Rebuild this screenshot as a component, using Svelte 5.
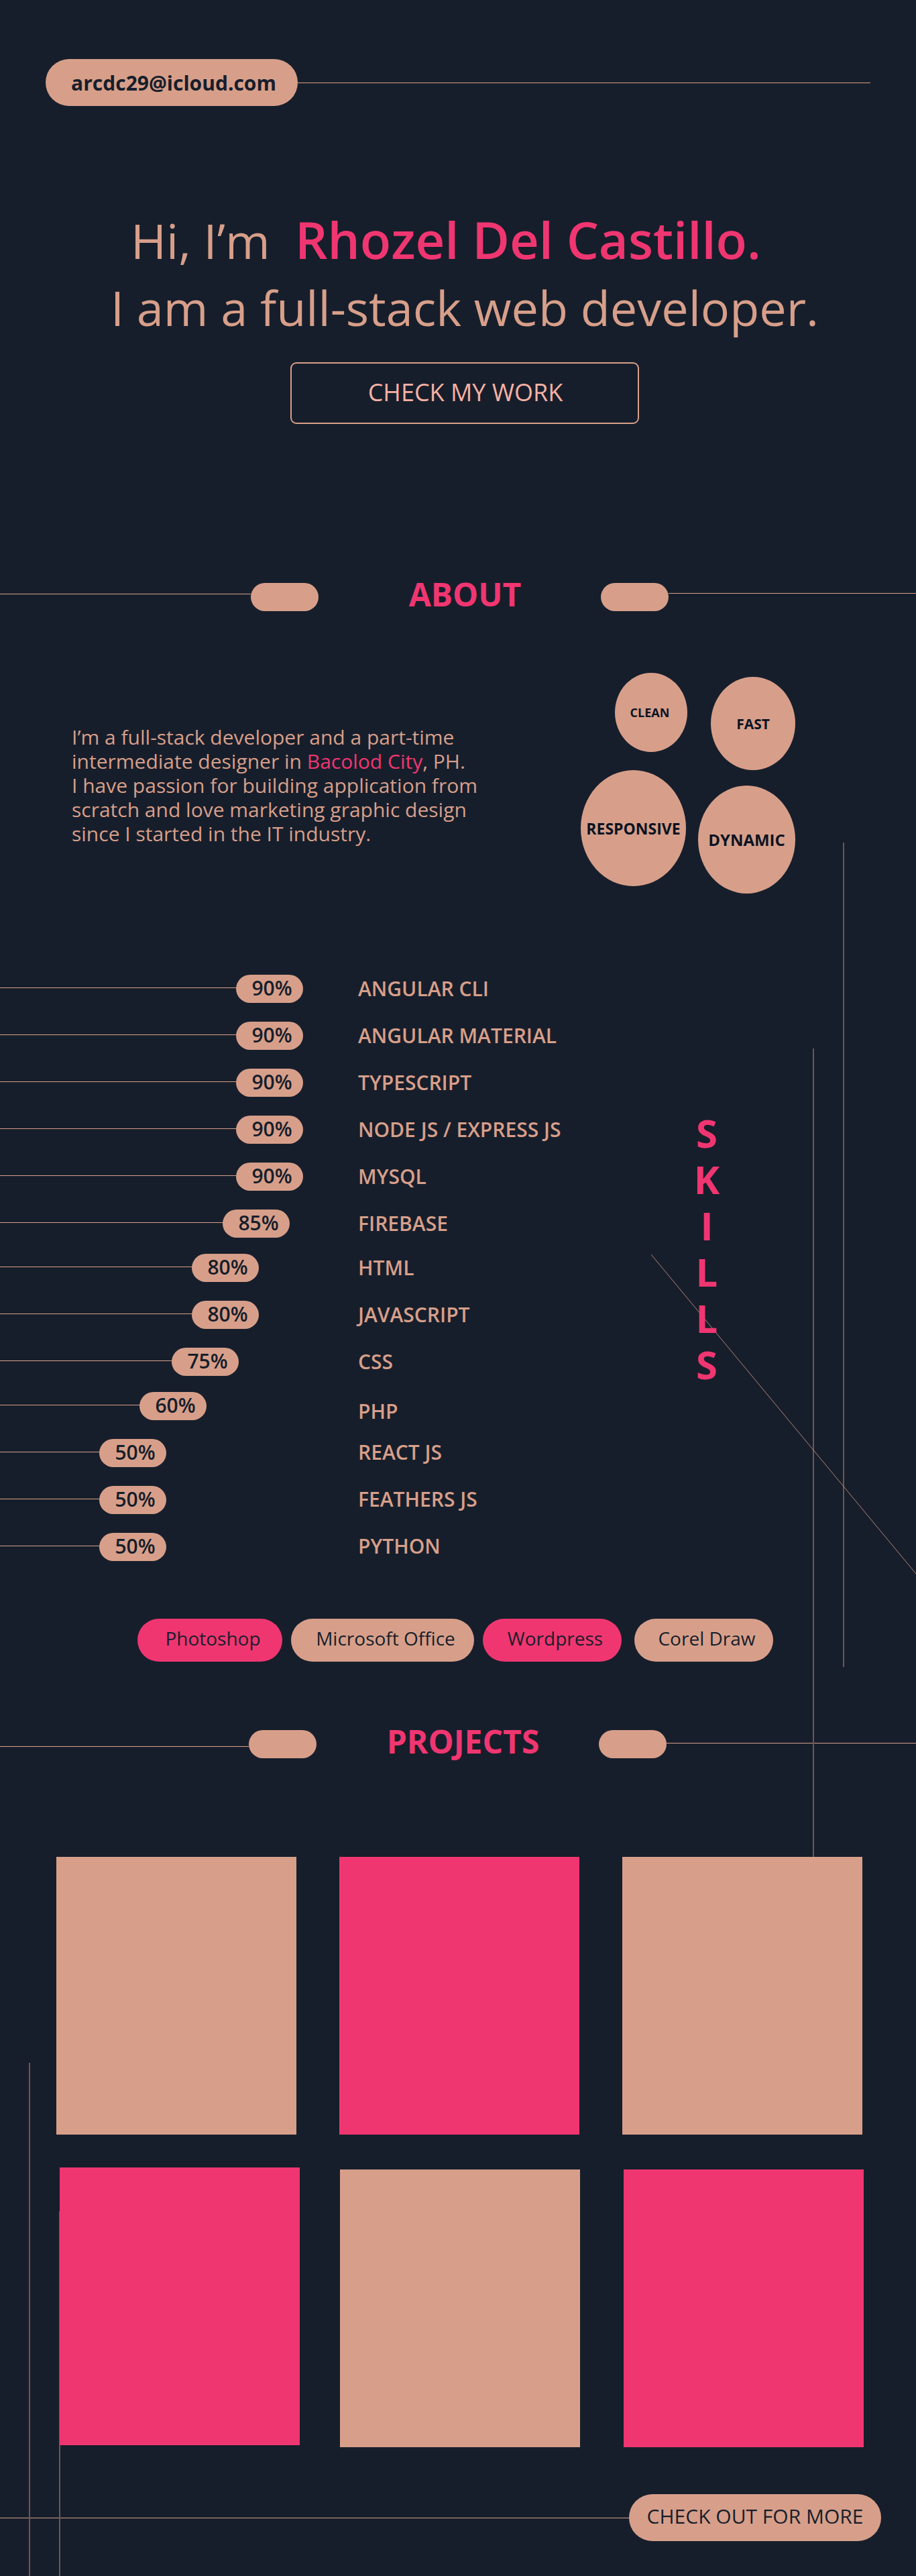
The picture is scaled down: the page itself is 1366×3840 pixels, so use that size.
<script>
  const groups = [
    [
      { name: 'ANGULAR CLI', value: 90, reach: 452 },
      { name: 'ANGULAR MATERIAL', value: 90, reach: 452 },
      { name: 'TYPESCRIPT', value: 90, reach: 452 },
      { name: 'NODE JS / EXPRESS JS', value: 90, reach: 452 },
      { name: 'MYSQL', value: 90, reach: 452 },
      { name: 'FIREBASE', value: 85, reach: 432 }
    ],
    [
      { name: 'HTML', value: 80, reach: 386 },
      { name: 'JAVASCRIPT', value: 80, reach: 386 },
      { name: 'CSS', value: 75, reach: 356 }
    ],
    [
      { name: 'PHP', value: 60, reach: 308, tall: true },
      { name: 'REACT JS', value: 50, reach: 248 },
      { name: 'FEATHERS JS', value: 50, reach: 248 },
      { name: 'PYTHON', value: 50, reach: 248 }
    ]
  ];
  const tools = [
    { name: 'Photoshop', pink: true },
    { name: 'Microsoft Office', pink: false },
    { name: 'Wordpress', pink: true },
    { name: 'Corel Draw', pink: false }
  ];
</script>

<div class="page">
  <header>
    <a class="pill" href="mailto:arcdc29@icloud.com">arcdc29@icloud.com</a>
    <span class="rule"></span>
  </header>

  <section class="hero">
    <h1>
      <span class="greeting">Hi, I’m&nbsp; <strong>Rhozel Del Castillo.</strong></span>
      <span>I am a full-stack web developer.</span>
    </h1>
    <button type="button">CHECK MY WORK</button>
  </section>

  <div class="heading about-heading">
    <span class="rule"></span>
    <span class="knob"></span>
    <h2>ABOUT</h2>
    <span class="knob"></span>
    <span class="rule"></span>
  </div>

  <section class="about">
    <p>
      I’m a full-stack developer and a part-time<br />
      intermediate designer in <em>Bacolod City</em>, PH.<br />
      I have passion for building application from<br />
      scratch and love marketing graphic design<br />
      since I started in the IT industry.
    </p>
    <div class="traits">
      <div class="trait-column">
        <span class="trait clean">CLEAN</span>
        <span class="trait responsive">RESPONSIVE</span>
      </div>
      <div class="trait-column second">
        <span class="trait fast">FAST</span>
        <span class="trait dynamic">DYNAMIC</span>
      </div>
    </div>
  </section>

  <section class="skills">
    <div class="groups">
      {#each groups as group}
        <ul>
          {#each group as skill}
            <li class:tall={skill.tall}>
              <span class="bar" style="width: {skill.reach}px">
                <span class="rule"></span>
                <span class="percent">{skill.value}%</span>
              </span>
              <span class="label">{skill.name}</span>
            </li>
          {/each}
        </ul>
      {/each}
    </div>
    <h2 class="vertical" aria-label="SKILLS">
      {#each 'SKILLS' as letter}<span>{letter}</span>{/each}
    </h2>
  </section>

  <ul class="tools">
    {#each tools as tool}
      <li class:pink={tool.pink}>{tool.name}</li>
    {/each}
  </ul>

  <div class="heading projects-heading">
    <span class="rule"></span>
    <span class="knob"></span>
    <h2>PROJECTS</h2>
    <span class="knob"></span>
    <span class="rule"></span>
  </div>

  <section class="projects">
    <div class="tiles upper">
      <div class="tile"></div>
      <div class="tile pink"></div>
      <div class="tile"></div>
    </div>
    <div class="tiles lower">
      <div class="tile pink"></div>
      <div class="tile"></div>
      <div class="tile pink"></div>
    </div>
  </section>

  <footer>
    <span class="rule"></span>
    <button type="button" class="pill">CHECK OUT FOR MORE</button>
  </footer>

  <span class="strand outer"></span>
  <span class="strand inner"></span>
  <span class="strand low-outer"></span>
  <span class="strand low-inner"></span>
  <svg class="diagonal" viewBox="0 0 395 476" preserveAspectRatio="none" aria-hidden="true">
    <line x1="0" y1="0" x2="395" y2="476" />
  </svg>
</div>

<style>
  :global(body) {
    margin: 0;
    background: #171e2b;
  }
  .page {
    --peach: #d79f8a;
    --pink: #f03671;
    --ink: #171e2b;
    position: relative;
    overflow: hidden;
    padding-bottom: 52px;
    background: var(--ink);
    color: var(--peach);
    font-family: 'Open Sans', 'Noto Sans', sans-serif;
  }
  h1,
  h2,
  p,
  ul {
    margin: 0;
    padding: 0;
    list-style: none;
  }
  button {
    font-family: inherit;
    cursor: pointer;
  }
  .rule {
    flex: 1;
    height: 1px;
    background: var(--peach);
  }
  .pill {
    display: flex;
    align-items: center;
    justify-content: center;
    box-sizing: border-box;
    width: 376px;
    height: 70px;
    border: 0;
    border-radius: 35px;
    background: var(--peach);
    color: var(--ink);
    text-decoration: none;
  }

  header {
    display: flex;
    align-items: center;
    padding: 88px 68px 0;
  }
  header .pill {
    padding-left: 6px;
    font-size: 30px;
    font-weight: 700;
  }

  .hero {
    display: flex;
    flex-direction: column;
    align-items: center;
    gap: 32px;
    padding: 150px 0 237px 20px;
  }
  h1 {
    font-size: 72px;
    line-height: 100px;
    font-weight: 400;
    white-space: nowrap;
  }
  h1 > span {
    display: block;
  }
  h1 .greeting {
    padding-left: 30px;
  }
  h1 strong {
    font-size: 76px;
    line-height: 90px;
    font-weight: 600;
    color: var(--pink);
  }
  .hero button {
    width: 520px;
    height: 92px;
    padding: 0 0 4px 2px;
    border: 2px solid var(--peach);
    border-radius: 9px;
    background: none;
    color: #f6b1a4;
    font-size: 36px;
  }

  .heading {
    display: grid;
    height: 42px;
  }
  .heading h2 {
    padding-left: 16px;
    font-size: 48px;
    line-height: 34px;
    font-weight: 700;
    text-align: center;
    color: var(--pink);
  }
  .knob {
    border-radius: 21px;
    background: var(--peach);
  }
  .about-heading {
    grid-template-columns: 374fr 101px 421px 101px 369fr;
  }
  .projects-heading {
    grid-template-columns: 371fr 101px 421px 101px 372fr;
  }
  .about-heading .rule {
    margin-top: 16px;
  }
  .about-heading .rule:last-child {
    margin-top: 15px;
  }
  .projects-heading .rule {
    margin-top: 24px;
  }
  .projects-heading .rule:last-child {
    margin-top: 19px;
  }

  .about {
    display: flex;
    justify-content: space-between;
    padding: 92px 180px 0 107px;
  }
  .about p {
    padding-top: 78px;
    font-size: 30px;
    line-height: 36px;
    white-space: nowrap;
  }
  .about em {
    font-style: normal;
    color: var(--pink);
  }
  .traits {
    display: flex;
    gap: 16px;
  }
  .trait-column {
    display: flex;
    flex-direction: column;
    align-items: flex-end;
    gap: 27px;
  }
  .trait-column.second {
    gap: 23px;
    padding-top: 6px;
  }
  .trait {
    display: flex;
    align-items: center;
    justify-content: center;
    box-sizing: border-box;
    border-radius: 50%;
    background: var(--peach);
    color: #0b1322;
    font-weight: 700;
  }
  .clean {
    width: 108px;
    height: 118px;
    padding-right: 4px;
    font-size: 18px;
  }
  .fast {
    width: 126px;
    height: 139px;
    font-size: 21px;
  }
  .responsive {
    width: 157px;
    height: 173px;
    margin-right: 2px;
    font-size: 23px;
  }
  .dynamic {
    width: 145px;
    height: 161px;
    font-size: 24px;
  }

  .skills {
    display: flex;
    justify-content: space-between;
    padding: 121px 282px 0 0;
  }
  .groups {
    display: flex;
    flex-direction: column;
    gap: 24px;
  }
  .groups ul {
    display: flex;
    flex-direction: column;
    gap: 28px;
  }
  .groups li {
    display: grid;
    grid-template-columns: 534px auto;
    height: 42px;
    font-size: 30px;
    line-height: 42px;
    font-weight: 600;
  }
  .groups ul:last-child {
    line-height: 40px;
  }
  .groups ul:last-child li {
    line-height: inherit;
  }
  .groups ul:last-child li.tall {
    line-height: 58px;
  }
  .bar {
    display: flex;
    height: 42px;
    line-height: 40px;
  }
  .bar .rule {
    margin-top: 19px;
  }
  .percent {
    box-sizing: border-box;
    width: 100px;
    padding-left: 7px;
    border-radius: 21px;
    background: var(--peach);
    color: var(--ink);
    text-align: center;
  }
  .label {
    white-space: nowrap;
  }
  .vertical {
    position: relative;
    z-index: 1;
    width: 60px;
    padding-top: 201px;
    font-size: 58px;
    line-height: 69px;
    font-weight: 700;
    text-align: center;
    color: var(--pink);
  }
  .vertical span {
    display: block;
  }

  .tools {
    display: grid;
    grid-template-columns: 216px 273px 207px 213px;
    gap: 13px;
    padding: 86px 0 102px 205px;
  }
  .tools li {
    box-sizing: border-box;
    height: 64px;
    padding-left: 9px;
    border-radius: 32px;
    background: var(--peach);
    color: var(--ink);
    font-size: 28px;
    line-height: 58px;
    text-align: center;
  }
  .tools li:last-child {
    margin-left: 6px;
  }
  .tools .pink,
  .tile.pink {
    background: var(--pink);
  }

  .projects {
    position: relative;
    z-index: 1;
    padding: 147px 0 70px;
  }
  .tiles {
    display: grid;
  }
  .tile {
    height: 414px;
    background: var(--peach);
  }
  .upper {
    grid-template-columns: 1fr 1fr 1fr;
    gap: 64px;
    padding: 0 80px 49px 84px;
  }
  .lower {
    grid-template-columns: 358fr 358fr 363fr;
    gap: 60px;
    padding: 0 78px 0 89px;
  }
  .lower .tile + .tile {
    margin-top: 3px;
  }
  .lower .tile:last-child {
    margin-left: 5px;
  }

  footer {
    display: flex;
    align-items: center;
    padding-right: 52px;
  }
  footer .pill {
    padding: 0 0 6px;
    font-size: 30px;
  }

  /* Thin decorative lines crossing the sections */
  .strand {
    position: absolute;
    width: 2px;
    background: #6e5653;
  }
  .outer {
    top: 1256px;
    right: 107px;
    height: 1229px;
  }
  .inner {
    top: 1563px;
    right: 152px;
    height: 1205px;
  }
  .low-outer {
    top: 3075px;
    bottom: 0;
    left: 43px;
  }
  .low-inner {
    top: 3296px;
    bottom: 0;
    left: 88px;
  }
  .diagonal {
    position: absolute;
    top: 1870px;
    right: 0;
    width: 395px;
    height: 476px;
  }
  .diagonal line {
    stroke: #d79f8a;
    stroke-width: 1;
    opacity: 0.8;
  }
</style>
